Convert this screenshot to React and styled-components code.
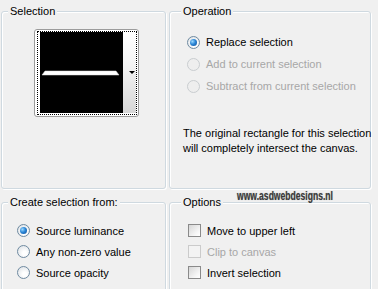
import React from "react";
import styled, { createGlobalStyle, css } from "styled-components";

const GlobalStyle = createGlobalStyle`
  html, body {
    margin: 0;
    padding: 0;
    background: #f0f0f0;
    overflow: hidden;
  }
  body {
    font-family: "Liberation Sans", Arial, sans-serif;
    font-size: 11px;
    color: #000;
  }
`;

const Dialog = styled.div`
  position: relative;
  display: grid;
  grid-template-columns: 165px 202px;
  grid-template-rows: 184px 100px;
  column-gap: 3px;
  row-gap: 7px;
  padding: 5px 0 0 1px;
`;

const Group = styled.fieldset`
  box-sizing: border-box;
  margin: 0;
  padding: 0;
  min-width: 0;
  border: 1px solid #cfd9e0;
  border-radius: 3px;
  box-shadow: inset 1px 1px 0 #fff, 1px 1px 0 #fff;
`;

const Legend = styled.legend`
  margin-left: ${({ $offset }) => $offset}px;
  padding: 0 2px;
  font-size: 11px;
  line-height: 13px;
  background: #f0f0f0;
`;

const Body = styled.div`
  padding: ${({ $top }) => $top}px 0 0 ${({ $left }) => $left}px;
`;

const Frame = styled.div`
  width: 100px;
  height: 84px;
  border: 1px solid #9c9c9c;
  border-radius: 3px;
  background: #fff;
  padding: 1px 1px 1px 2px;
  box-sizing: content-box;
`;

const Focus = styled.div`
  display: flex;
  height: 100%;
  box-sizing: border-box;
  border: 1px dotted #000;
  padding: 0 0 1px 2px;
`;

const Canvas = styled.div`
  flex: 1;
  background: #000;
  display: flex;
  align-items: center;
`;

const Strip = styled.div`
  width: 12px;
  display: flex;
  align-items: center;
  justify-content: flex-end;
  padding-right: 1px;
  background: linear-gradient(to bottom, #fff 0%, #f4f4f4 40%, #d6d6d6 100%);
`;

const Arrow = styled.span`
  width: 0;
  height: 0;
  border-left: 3px solid transparent;
  border-right: 3px solid transparent;
  border-top: 3px solid #000;
`;

const Row = styled.label`
  display: flex;
  align-items: center;
  height: ${({ $h }) => $h}px;
  gap: 6px;
  white-space: nowrap;
  color: ${({ $disabled }) => ($disabled ? "#a7a7a7" : "#000")};
`;

const Radio = styled.span`
  width: 11px;
  height: 11px;
  border-radius: 50%;
  display: flex;
  align-items: center;
  justify-content: center;
  border: 1px solid ${({ $disabled }) => ($disabled ? "#c9cdd0" : "#6f8aa0")};
  background: ${({ $disabled }) =>
    $disabled
      ? "#eeeeee"
      : "radial-gradient(circle at 60% 65%, #ffffff 20%, #d8dde2 100%)"};
  ${({ $checked }) =>
    $checked &&
    css`
      &::after {
        content: "";
        width: 7px;
        height: 7px;
        border-radius: 50%;
        background: radial-gradient(circle at 35% 35%, #9ad8ff 0%, #2b86d6 45%, #0d4a95 100%);
      }
    `}
`;

const Check = styled.span`
  width: 11px;
  height: 11px;
  border: 1px solid ${({ $disabled }) => ($disabled ? "#cbcbcb" : "#8a8a8a")};
  background: ${({ $disabled }) =>
    $disabled ? "#f3f3f3" : "linear-gradient(135deg, #d6d6d6 0%, #f6f6f6 70%, #fff 100%)"};
`;

const Note = styled.p`
  margin: 29px 0 0 -4px;
  line-height: 15px;
  white-space: nowrap;
`;

const Watermark = styled.div`
  position: absolute;
  left: 237px;
  top: 188px;
  font-family: "Liberation Sans", Arial, sans-serif;
  font-weight: bold;
  font-size: 13px;
  color: #3a3a3a;
  text-shadow: 0 0 1px #999;
  transform: scaleX(0.66);
  transform-origin: left top;
  white-space: nowrap;
`;

const App = () => {
  return (
    <>
      <GlobalStyle />
      <Dialog>
        <Group>
          <Legend $offset={6}>Selection</Legend>
          <Body $top={11} $left={32}>
            <Frame>
              <Focus>
                <Canvas>
                  <svg width="80" height="6" viewBox="0 0 80 6">
                    <polygon points="5,1 76,1 79,5 2,5" fill="#fff" stroke="#ddd" strokeWidth="0.5" />
                  </svg>
                </Canvas>
                <Strip>
                  <Arrow />
                </Strip>
              </Focus>
            </Frame>
          </Body>
        </Group>

        <Group>
          <Legend $offset={11}>Operation</Legend>
          <Body $top={13} $left={17}>
            <Row $h={22}>
              <Radio $checked />
              Replace selection
            </Row>
            <Row $h={22} $disabled>
              <Radio $disabled />
              Add to current selection
            </Row>
            <Row $h={22} $disabled>
              <Radio $disabled />
              Subtract from current selection
            </Row>
            <Note>
              The original rectangle for this selection
              <br />
              will completely intersect the canvas.
            </Note>
          </Body>
        </Group>

        <Group>
          <Legend $offset={6}>Create selection from:</Legend>
          <Body $top={11} $left={15}>
            <Row $h={21}>
              <Radio $checked />
              Source luminance
            </Row>
            <Row $h={21}>
              <Radio />
              Any non-zero value
            </Row>
            <Row $h={21}>
              <Radio />
              Source opacity
            </Row>
          </Body>
        </Group>

        <Group>
          <Legend $offset={11}>Options</Legend>
          <Body $top={11} $left={18}>
            <Row $h={21}>
              <Check />
              Move to upper left
            </Row>
            <Row $h={21} $disabled>
              <Check $disabled />
              Clip to canvas
            </Row>
            <Row $h={21}>
              <Check />
              Invert selection
            </Row>
          </Body>
        </Group>

        <Watermark>www.asdwebdesigns.nl</Watermark>
      </Dialog>
    </>
  );
};

export default App;
